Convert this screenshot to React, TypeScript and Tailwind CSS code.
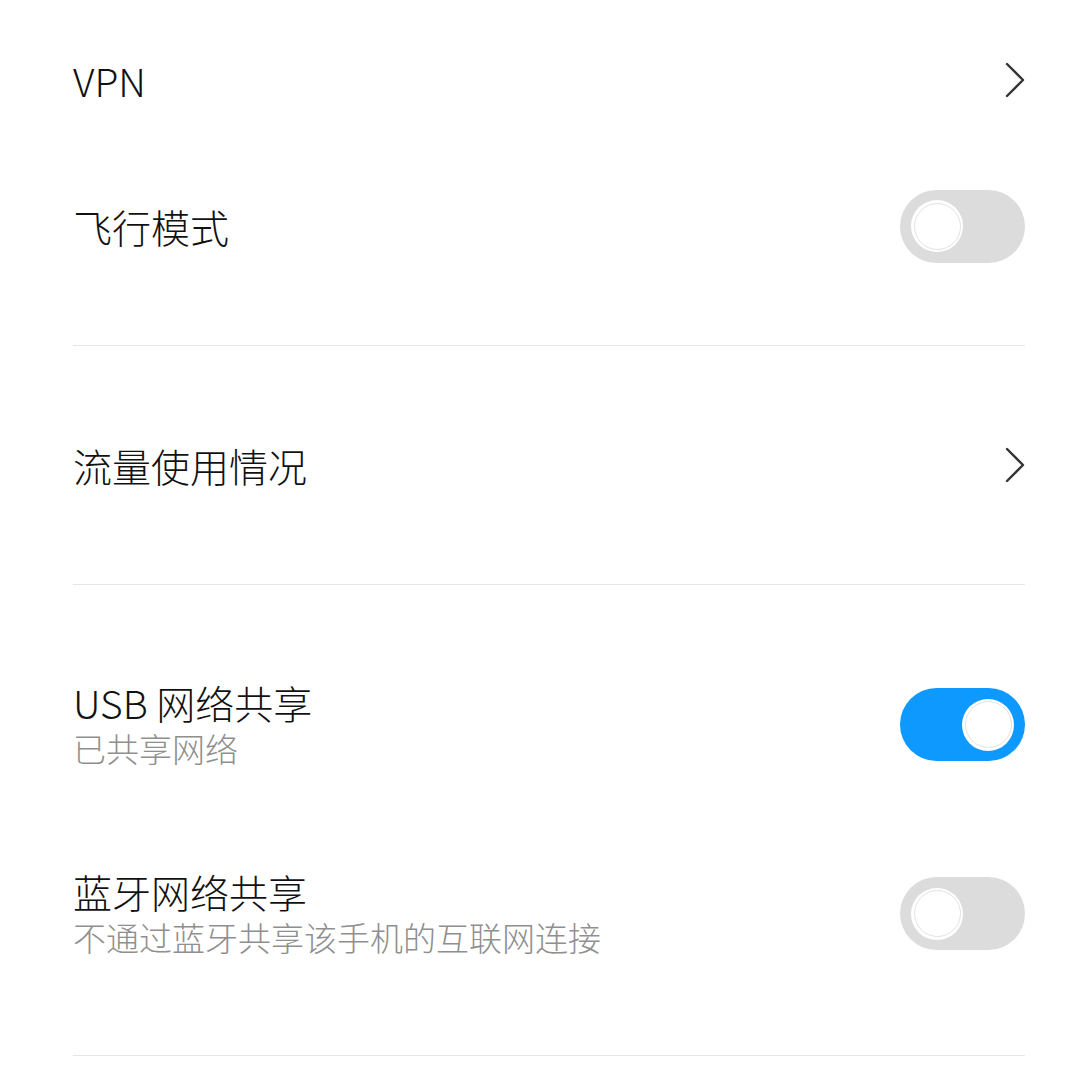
import { ReactNode } from "react";

const font = {
  fontFamily: '"Noto Sans CJK SC", "Noto Sans", sans-serif',
};

const Chevron = () => (
  <svg width="20" height="36" viewBox="0 0 20 36" fill="none">
    <path
      d="M2 2 L18 18 L2 34"
      stroke="#333333"
      strokeWidth="2.4"
      strokeLinecap="round"
      strokeLinejoin="round"
    />
  </svg>
);

const Toggle = ({ on }: { on: boolean }) => (
  <div
    className={
      on
        ? "w-[125px] h-[73px] rounded-full bg-[#0d99ff] flex items-center justify-end px-[11px]"
        : "w-[125px] h-[73px] rounded-full bg-[#dcdcdc] flex items-center justify-start px-[11px]"
    }
  >
    <div className="w-[52px] h-[52px] rounded-full bg-white flex items-center justify-center">
      <div className="w-[47px] h-[47px] rounded-full border border-[#e2e2e2]" />
    </div>
  </div>
);

const Row = ({
  title,
  sub,
  right,
}: {
  title: string;
  sub?: string;
  right: ReactNode;
}) => (
  <div
    className={
      sub
        ? "h-[189px] flex items-center justify-between"
        : "h-[146px] flex items-center justify-between"
    }
  >
    <div className="flex flex-col">
      <div className="text-[39px] leading-[46px] text-[#111111] font-light">
        {title}
      </div>
      {sub && (
        <div className="text-[33px] leading-[46px] text-[#8f8f8f] font-light">
          {sub}
        </div>
      )}
    </div>
    {right}
  </div>
);

const App = () => {
  return (
    <div className="w-[1080px] h-[1072px] bg-white overflow-hidden" style={font}>
      <div className="ml-[73px] mr-[55px]">
        <div className="pt-[7px] pb-[46px]">
          <Row title="VPN" right={<Chevron />} />
          <Row title="飞行模式" right={<Toggle on={false} />} />
        </div>
        <hr className="border-t border-[#e6e6e6]" />
        <div className="py-[46px]">
          <Row title="流量使用情况" right={<Chevron />} />
        </div>
        <hr className="border-t border-[#e6e6e6]" />
        <div className="pt-[45px] pb-[47px]">
          <Row title="USB 网络共享" sub="已共享网络" right={<Toggle on={true} />} />
          <Row
            title="蓝牙网络共享"
            sub="不通过蓝牙共享该手机的互联网连接"
            right={<Toggle on={false} />}
          />
        </div>
        <hr className="border-t border-[#e6e6e6]" />
      </div>
    </div>
  );
};

export default App;
